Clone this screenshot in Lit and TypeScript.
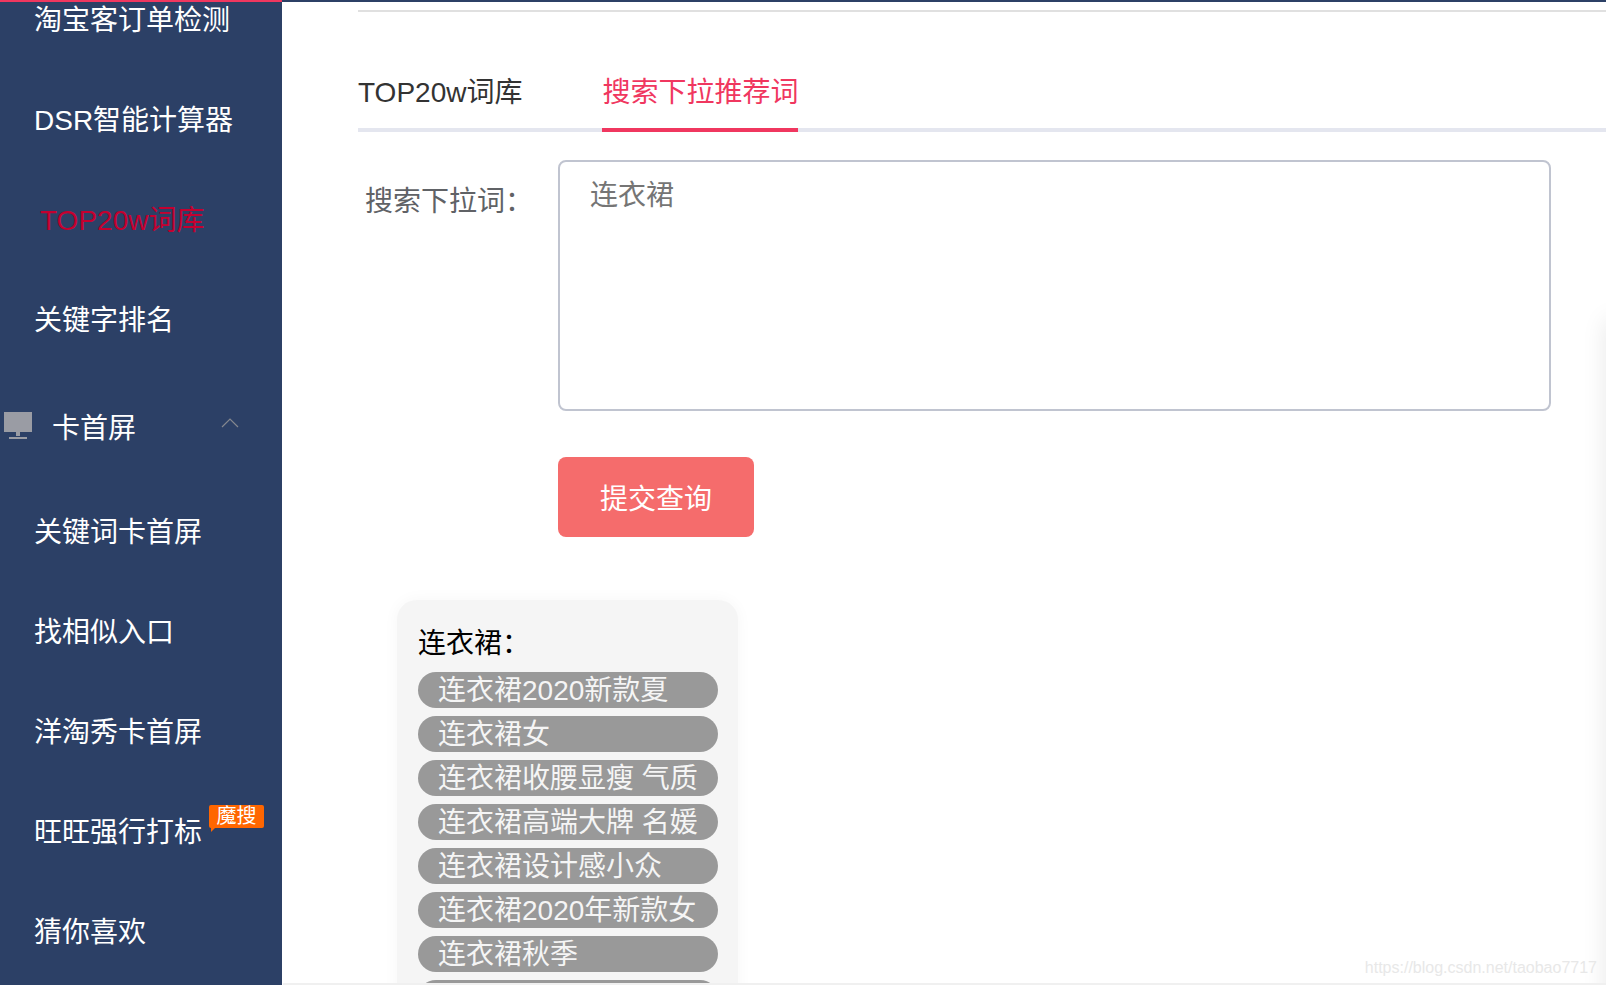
import { LitElement, html, css } from 'lit';
import { customElement } from 'lit/decorators.js';

const SANS = css`"Liberation Sans", "Noto Sans CJK SC", sans-serif`;
const SERIF = css`"Liberation Serif", "Noto Sans CJK SC", serif`;

const chips = [
  '连衣裙2020新款夏',
  '连衣裙女',
  '连衣裙收腰显瘦 气质',
  '连衣裙高端大牌 名媛',
  '连衣裙设计感小众',
  '连衣裙2020年新款女',
  '连衣裙秋季',
  '连衣裙长款过膝',
];

@customElement('app-root')
export class AppRoot extends LitElement {
  static styles = css`
    :host {
      display: block;
      font-family: ${SANS};
    }
    .page {
      position: relative;
      display: flex;
      width: 1606px;
      height: 985px;
      overflow: hidden;
      background: #fff;
    }
    .sidebar {
      flex: none;
      width: 282px;
      height: 985px;
      background: #2c4066;
      border-top: 2px solid #f0375f;
      box-sizing: border-box;
      overflow: hidden;
    }
    .menu {
      margin-top: -34px;
    }
    .item {
      position: relative;
      height: 100px;
      padding-left: 34px;
      display: flex;
      align-items: center;
      font-size: 28px;
      color: #fff;
    }
    .item.active {
      padding-left: 40px;
      color: #c4002f;
    }
    .group {
      height: 108px;
      margin-top: 4px;
      padding-left: 4px;
    }
    .group .monitor {
      width: 28px;
      height: 28px;
      margin-right: 20px;
      flex: none;
    }
    .group .chevron {
      position: absolute;
      left: 221px;
      top: 46px;
      width: 18px;
      height: 10px;
    }
    .badge {
      position: absolute;
      left: 209px;
      top: 25px;
      width: 55px;
      height: 23px;
      border-radius: 2px;
      background: #ff6600;
      color: #fff;
      font-size: 20px;
      line-height: 23px;
      text-align: center;
    }
    .badge::after {
      content: '';
      position: absolute;
      left: 2px;
      bottom: -4px;
      border-top: 4px solid #ff6600;
      border-right: 4px solid transparent;
    }
    .main {
      flex: 1;
      min-width: 0;
      border-top: 2px solid #2c4066;
      padding: 8px 0 0 76px;
      box-sizing: border-box;
    }
    .rule {
      height: 2px;
      background: #e0e0e0;
    }
    .tabs {
      display: flex;
      gap: 80px;
      height: 120px;
      box-sizing: border-box;
      border-bottom: 4px solid #e4e6ef;
      padding-top: 50px;
    }
    .tab {
      height: 70px;
      line-height: 62px;
      font-size: 28px;
      color: #333;
      box-sizing: border-box;
    }
    .tab.active {
      color: #f0375f;
      border-bottom: 4px solid #f0375f;
    }
    .form {
      display: flex;
      margin-top: 28px;
    }
    .label {
      width: 200px;
      padding: 22px 0 0 7px;
      box-sizing: border-box;
      font-size: 28px;
      line-height: 40px;
      color: #606266;
    }
    textarea {
      display: block;
      width: 993px;
      height: 251px;
      padding: 16px 30px;
      box-sizing: border-box;
      border: 2px solid #c0c4d0;
      border-radius: 8px;
      outline: none;
      resize: none;
      font-family: ${SERIF};
      font-size: 28px;
      line-height: 36px;
      background: #fff;
    }
    textarea::placeholder {
      color: #757575;
    }
    .submit {
      display: block;
      width: 196px;
      height: 80px;
      margin: 46px 0 0 200px;
      border: none;
      border-radius: 8px;
      background: #f56c6c;
      color: #fff;
      font-family: ${SERIF};
      font-size: 28px;
    }
    .card {
      width: 341px;
      margin: 63px 0 0 39px;
      padding: 22px 20px 0 21px;
      box-sizing: border-box;
      border-radius: 20px;
      background: #f5f5f5;
      box-shadow: 0 0 16px rgba(0, 0, 0, 0.04);
    }
    .card-title {
      font-size: 28px;
      line-height: 44px;
      height: 50px;
      color: #000;
    }
    .chips {
      display: flex;
      flex-direction: column;
      gap: 8px;
    }
    .chip {
      height: 36px;
      padding-left: 20px;
      border-radius: 18px;
      background: #999;
      color: #f5f5f5;
      font-size: 28px;
      line-height: 37px;
      white-space: nowrap;
    }
    .side-shadow {
      position: absolute;
      left: 1606px;
      top: 320px;
      width: 20px;
      height: 700px;
      box-shadow: 0 0 24px rgba(0, 0, 0, 0.1);
    }
    .strip {
      position: absolute;
      left: 283px;
      right: 0;
      bottom: 0;
      height: 2px;
      background: #f0f0f0;
    }
    .watermark {
      position: absolute;
      right: 9px;
      bottom: 8px;
      font-size: 16px;
      color: #e8e8e8;
    }
  `;

  render() {
    return html`
      <div class="page">
        <aside class="sidebar">
          <div class="menu">
            <div class="item">淘宝客订单检测</div>
            <div class="item">DSR智能计算器</div>
            <div class="item active">TOP20w词库</div>
            <div class="item">关键字排名</div>
            <div class="item group">
              <svg class="monitor" viewBox="0 0 28 28">
                <rect x="0" y="0" width="28" height="20" fill="#9a9ca4" />
                <rect x="12" y="20" width="4" height="4" fill="#9a9ca4" />
                <rect x="5" y="25" width="18" height="2" fill="#9a9ca4" />
              </svg>
              卡首屏
              <svg class="chevron" viewBox="0 0 18 10">
                <path d="M1 9 L9 1 L17 9" fill="none" stroke="#85888f" stroke-width="1.2" />
              </svg>
            </div>
            <div class="item">关键词卡首屏</div>
            <div class="item">找相似入口</div>
            <div class="item">洋淘秀卡首屏</div>
            <div class="item">旺旺强行打标<span class="badge">魔搜</span></div>
            <div class="item">猜你喜欢</div>
          </div>
        </aside>
        <main class="main">
          <div class="rule"></div>
          <div class="tabs">
            <div class="tab">TOP20w词库</div>
            <div class="tab active">搜索下拉推荐词</div>
          </div>
          <div class="form">
            <div class="label">搜索下拉词：</div>
            <textarea placeholder="连衣裙"></textarea>
          </div>
          <button class="submit">提交查询</button>
          <section class="card">
            <div class="card-title">连衣裙：</div>
            <div class="chips">
              ${chips.map((c) => html`<div class="chip">${c}</div>`)}
            </div>
          </section>
        </main>
        <div class="side-shadow"></div>
        <div class="strip"></div>
        <div class="watermark">https://blog.csdn.net/taobao7717</div>
      </div>
    `;
  }
}
